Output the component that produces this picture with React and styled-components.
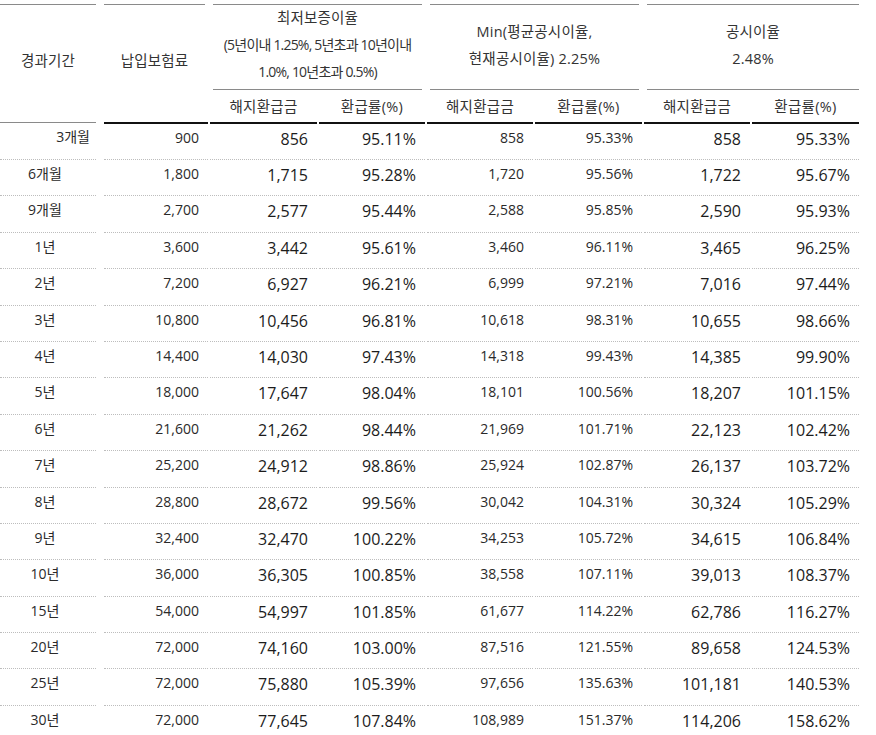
import React from "react";
import styled, { createGlobalStyle } from "styled-components";

const GlobalStyle = createGlobalStyle`
  html, body {
    margin: 0;
    padding: 0;
    background: #fff;
    overflow: hidden;
  }
  body {
    font-family: "Open Sans", "Noto Sans CJK KR", sans-serif;
    color: #222;
  }
`;

const Table = styled.div`
  display: grid;
  grid-template-columns: 104px 106px 109px 108px 108px 109px 108px 109px;
  grid-template-rows: 86px 32px 38px;
  grid-auto-rows: 36.4px;
  width: 861px;
  padding-top: 4px;
`;

const HeadCell = styled.div`
  grid-column: ${(p) => p.$col};
  grid-row: ${(p) => p.$row};
  margin: 0 ${(p) => p.$mr}px 0 ${(p) => p.$ml || 0}px;
  border-top: 1px solid #8a8a8a;
  border-bottom: ${(p) => (p.$underline ? "1px solid #8a8a8a" : "none")};
  display: flex;
  flex-direction: column;
  align-items: center;
  justify-content: center;
  padding-bottom: ${(p) => p.$pb || 0}px;
  box-sizing: border-box;
  font-size: 14.5px;
  letter-spacing: 0.2px;
  line-height: 27px;
  color: #333;
  text-align: center;
`;

const Tight = styled.span`
  font-size: 14px;
  letter-spacing: -0.8px;
  white-space: nowrap;
`;

const SubHead = styled.div`
  margin-right: 2px;
  display: flex;
  align-items: center;
  justify-content: center;
  font-size: 14.5px;
  letter-spacing: 0.3px;
  color: #333;
  padding-bottom: 1px;
`;

const BodyCell = styled.div`
  margin-right: ${(p) => (p.$first ? 8 : 2)}px;
  box-sizing: border-box;
  border-top: ${(p) =>
    p.$top ? (p.$first ? "1px solid #8a8a8a" : "2px solid #111") : "none"};
  border-bottom: 1px dotted #bdbdbd;
  padding: ${(p) => (p.$top && p.$first ? 4 : p.$large ? 3 : 4)}px 9px 0 0;
  padding-right: ${(p) => (p.$first ? 6 : 9)}px;
  text-align: ${(p) => p.$align};
  font-size: ${(p) => (p.$large ? 16 : 14)}px;
  line-height: ${(p) => (p.$large ? 24 : 20)}px;
  color: ${(p) => (p.$large ? "#1c1c1c" : "#2a2a2a")};
  white-space: nowrap;
`;

const rows = [
  ["3개월", "900", "856", "95.11%", "858", "95.33%", "858", "95.33%"],
  ["6개월", "1,800", "1,715", "95.28%", "1,720", "95.56%", "1,722", "95.67%"],
  ["9개월", "2,700", "2,577", "95.44%", "2,588", "95.85%", "2,590", "95.93%"],
  ["1년", "3,600", "3,442", "95.61%", "3,460", "96.11%", "3,465", "96.25%"],
  ["2년", "7,200", "6,927", "96.21%", "6,999", "97.21%", "7,016", "97.44%"],
  ["3년", "10,800", "10,456", "96.81%", "10,618", "98.31%", "10,655", "98.66%"],
  ["4년", "14,400", "14,030", "97.43%", "14,318", "99.43%", "14,385", "99.90%"],
  ["5년", "18,000", "17,647", "98.04%", "18,101", "100.56%", "18,207", "101.15%"],
  ["6년", "21,600", "21,262", "98.44%", "21,969", "101.71%", "22,123", "102.42%"],
  ["7년", "25,200", "24,912", "98.86%", "25,924", "102.87%", "26,137", "103.72%"],
  ["8년", "28,800", "28,672", "99.56%", "30,042", "104.31%", "30,324", "105.29%"],
  ["9년", "32,400", "32,470", "100.22%", "34,253", "105.72%", "34,615", "106.84%"],
  ["10년", "36,000", "36,305", "100.85%", "38,558", "107.11%", "39,013", "108.37%"],
  ["15년", "54,000", "54,997", "101.85%", "61,677", "114.22%", "62,786", "116.27%"],
  ["20년", "72,000", "74,160", "103.00%", "87,516", "121.55%", "89,658", "124.53%"],
  ["25년", "72,000", "75,880", "105.39%", "97,656", "135.63%", "101,181", "140.53%"],
  ["30년", "72,000", "77,645", "107.84%", "108,989", "151.37%", "114,206", "158.62%"],
];

const largeCols = [false, false, true, true, false, false, true, true];

export default function App() {
  return (
    <>
      <GlobalStyle />
      <Table>
        <HeadCell $col="1" $row="1 / span 2" $mr={8} $pb={6}>
          경과기간
        </HeadCell>
        <HeadCell $col="2" $row="1 / span 2" $mr={5} $pb={6}>
          납입보험료
        </HeadCell>
        <HeadCell $col="3 / span 2" $row="1" $ml={3} $mr={5} $underline $pb={5}>
          <div>최저보증이율</div>
          <Tight>(5년이내 1.25%, 5년초과 10년이내</Tight>
          <Tight>1.0%, 10년초과 0.5%)</Tight>
        </HeadCell>
        <HeadCell $col="5 / span 2" $row="1" $ml={3} $mr={5} $underline $pb={5}>
          <div>Min(평균공시이율,</div>
          <div>현재공시이율) 2.25%</div>
        </HeadCell>
        <HeadCell $col="7 / span 2" $row="1" $ml={3} $mr={2} $underline $pb={5}>
          <div>공시이율</div>
          <div>2.48%</div>
        </HeadCell>
        {[0, 1, 2].map((g) => (
          <React.Fragment key={g}>
            <SubHead>해지환급금</SubHead>
            <SubHead>환급률(%)</SubHead>
          </React.Fragment>
        ))}
        {rows.map((r, ri) =>
          r.map((v, ci) => (
            <BodyCell
              key={`${ri}-${ci}`}
              $first={ci === 0}
              $top={ri === 0}
              $large={largeCols[ci]}
              $align={ci === 0 && ri !== 0 ? "center" : "right"}
            >
              {v}
            </BodyCell>
          ))
        )}
      </Table>
    </>
  );
}
